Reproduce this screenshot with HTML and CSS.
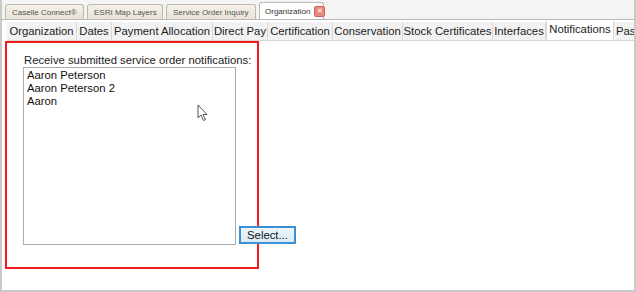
FILE: index.html
```html
<!DOCTYPE html>
<html lang="en">
<head>
  <meta charset="UTF-8" />
  <title>Organization - Notifications</title>
  <link rel="stylesheet" href="styles.css">
</head>
<body>
  <div class="window">
    <div class="doc-tabs">
      <div class="doc-tab w-caselle">Caselle Connect®</div>
      <div class="doc-tab w-esri">ESRI Map Layers</div>
      <div class="doc-tab w-inquiry">Service Order Inquiry</div>
      <div class="doc-tab active w-org">Organization <span class="close">&#x2715;</span></div>
    </div>

    <div class="page">
      <div class="tabs">
        <div class="tab t-org">Organization</div>
        <div class="tab t-dates">Dates</div>
        <div class="tab t-payment">Payment Allocation</div>
        <div class="tab t-direct">Direct Pay</div>
        <div class="tab t-cert">Certification</div>
        <div class="tab t-cons">Conservation</div>
        <div class="tab t-stock">Stock Certificates</div>
        <div class="tab t-inter">Interfaces</div>
        <div class="tab active t-notif">Notifications</div>
        <div class="tab t-pass">Pas</div>
      </div>

      <div class="content">
        <div class="highlight">
          <div class="label">Receive submitted service order notifications:</div>
          <div class="row">
            <div class="listbox">
              <div>Aaron Peterson</div>
              <div>Aaron Peterson 2</div>
              <div>Aaron</div>
            </div>
            <button class="select-btn">Select...</button>
          </div>
        </div>
        <svg class="cursor" width="12" height="18" viewBox="0 0 12 18">
          <path d="M1 1 L1 14 L4 11 L6.5 16.5 L8.5 15.5 L6 10.5 L10 10.5 Z" fill="#fff" stroke="#555" stroke-width="1"/>
        </svg>
      </div>
    </div>
  </div>
</body>
</html>
```

FILE: styles.css
```css
body {
  margin: 0;
  font-family: "Liberation Sans", Tahoma, sans-serif;
  background: #fff;
}

.window {
  width: 636px;
  height: 292px;
  box-sizing: border-box;
  border-left: 2px solid #c9c9c9;
  border-right: 2px solid #c9c9c9;
  border-bottom: 2px solid #c9c9c9;
  display: flex;
  flex-direction: column;
  background: #fff;
}

.doc-tabs {
  display: flex;
  gap: 3px;
  padding: 3px 0 0 3px;
  height: 16px;
  background: #f4f4f4;
  border-bottom: 1px solid #b8b8b8;
}

.doc-tab {
  display: flex;
  align-items: center;
  gap: 4px;
  padding: 0 6px;
  box-sizing: border-box;
  font-size: 8px;
  color: #555;
  background: linear-gradient(#f5f1ea, #e8e2d8);
  border: 1px solid #bdb8b0;
  border-bottom: none;
  border-radius: 3px 3px 0 0;
  height: 15px;
  margin-top: 1px;
  white-space: nowrap;
}

.w-caselle { width: 79px; }
.w-esri { width: 76px; }
.w-inquiry { width: 90px; }
.w-org { width: 65px; padding: 0 2px 0 5px; }

.doc-tab.active {
  background: #fff;
  color: #333;
  height: 17px;
  margin-top: -1px;
  margin-bottom: -1px;
  position: relative;
}

.close {
  display: inline-flex;
  align-items: center;
  justify-content: center;
  flex-shrink: 0;
  width: 9px;
  height: 9px;
  font-size: 7px;
  color: #fff;
  background: #e88a80;
  border: 1px solid #d06055;
  border-radius: 2px;
}

.page {
  flex: 1;
  display: flex;
  flex-direction: column;
  padding: 1px 0 0 3px;
}

.tabs {
  display: flex;
  height: 19px;
  margin-left: 2px;
  border-bottom: 1px solid #d8d8d8;
  overflow: hidden;
}

.tab {
  flex-shrink: 0;
  box-sizing: border-box;
  font-size: 11.3px;
  color: #222;
  text-align: center;
  padding-top: 3px;
  margin-top: 1px;
  background: #f2f2f2;
  border-right: 1px solid #d8d8d8;
  white-space: nowrap;
}

.t-org { width: 70px; }
.t-dates { width: 35px; }
.t-payment { width: 101px; }
.t-direct { width: 55px; }
.t-cert { width: 65px; }
.t-cons { width: 70px; }
.t-stock { width: 90px; }
.t-inter { width: 53px; }
.t-notif { width: 68px; }
.t-pass { flex: 1; min-width: 0; text-align: left; padding-left: 2px; border-right: none; }

.tab.active {
  background: #fff;
  margin-top: -1px;
  padding-top: 3px;
  border-left: 1px solid #d8d8d8;
  border-bottom: 1px solid #fff;
}

.content {
  flex: 1;
  position: relative;
}

.highlight {
  width: 254px;
  height: 228px;
  border: 2px solid #f21a1a;
  padding: 11px 0 0 16px;
  box-sizing: border-box;
}

.label {
  font-size: 11.3px;
  color: #222;
  margin-left: 1px;
  margin-bottom: 1px;
  white-space: nowrap;
}

.row {
  display: flex;
  align-items: flex-end;
}

.listbox {
  width: 213px;
  height: 178px;
  box-sizing: border-box;
  border: 1px solid #ababab;
  padding: 1px 3px;
  font-size: 11.3px;
  line-height: 13px;
  color: #111;
  flex-shrink: 0;
}

.select-btn {
  margin-left: 3px;
  margin-bottom: 1px;
  width: 57px;
  height: 18px;
  padding: 0;
  font-family: "Liberation Sans", Tahoma, sans-serif;
  font-size: 11.3px;
  color: #111;
  background: linear-gradient(#eaf5fc, #d9ecf8);
  border: 2px solid #3c8fd1;
  flex-shrink: 0;
}

.cursor {
  position: absolute;
  left: 192px;
  top: 63px;
}
```
